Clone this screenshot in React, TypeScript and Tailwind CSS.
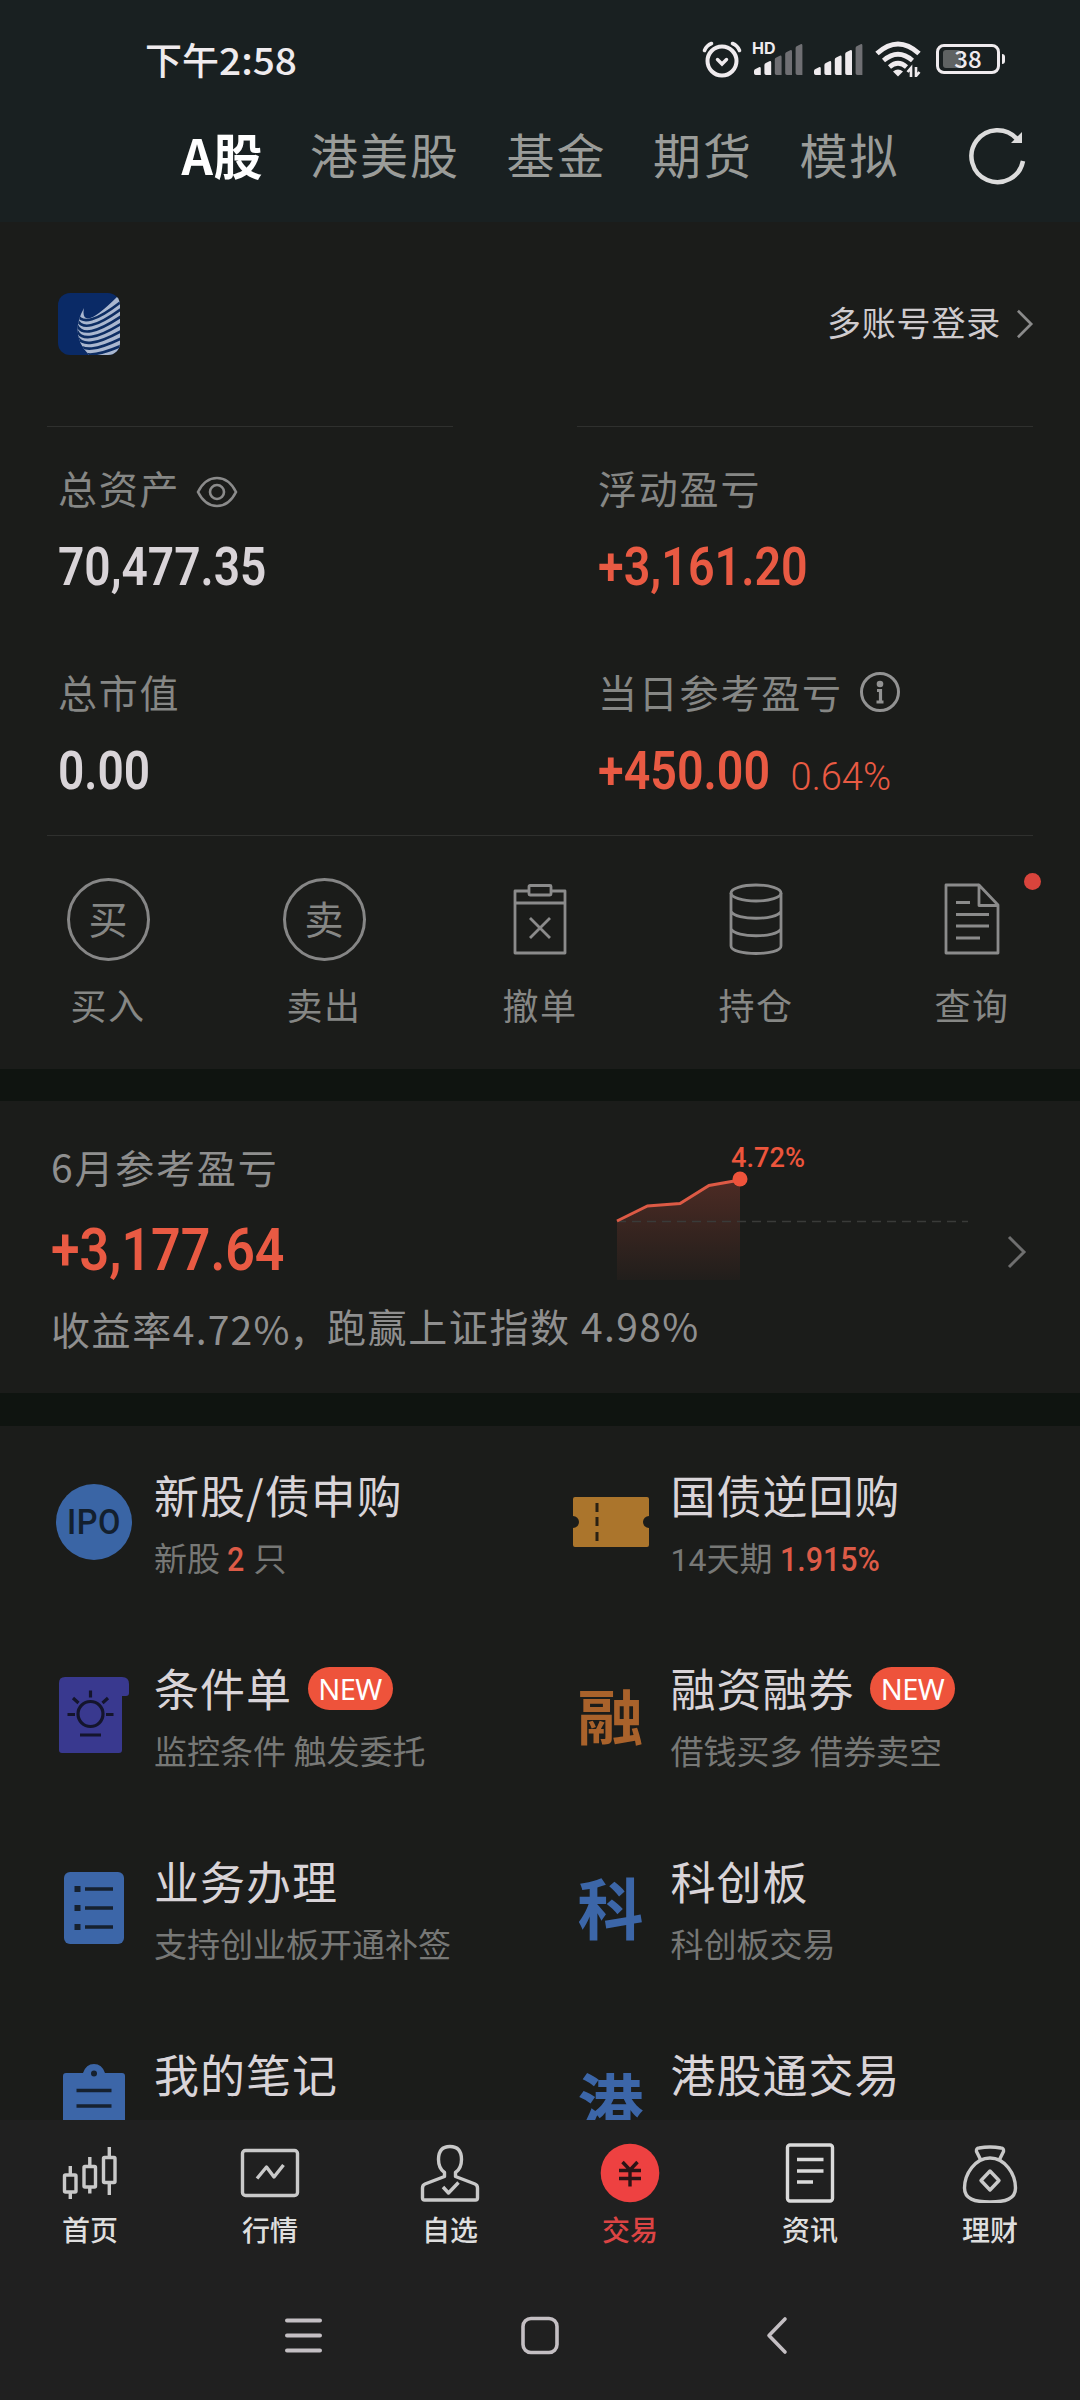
import React from 'react';

type IconProps = { className?: string };

const tabs = ['港美股', '基金', '期货', '模拟'];

function SignalBars({ active }: { active: number }) {
  const tops = [23, 17, 11.5, 6, 0];
  return (
    <svg width="50" height="31" viewBox="0 0 50 31">
      {tops.map((top, i) => (
        <path
          key={i}
          d={`M${i * 10.4} ${top + 4}q0 -1.5 1.5 -2l3.5 -1.8q1.8 -.5 1.8 1.3V31h-5q-1.8 0 -1.8 -1.8z`}
          fill={i < active ? '#efebee' : '#6f6f73'}
        />
      ))}
    </svg>
  );
}

function StatusBar() {
  return (
    <div className="flex h-[118px] items-center pl-[145px] pr-[80px] text-[#efebee]">
      <span className="text-[37px] font-medium leading-none">
        下午<span className="inline-block origin-left scale-x-[1.05]">2:58</span>
      </span>
      <div className="ml-auto flex items-center">
        <svg width="40" height="38" viewBox="0 0 40 38" fill="none" stroke="#efebee" strokeWidth="4" strokeLinecap="round">
          <circle cx="20" cy="21" r="14.5" />
          <path d="M15.5 19.5l4.5 4.5 4.5-4.5" strokeWidth="3.4" />
          <path d="M2.5 10.5Q4.5 5.500 9.500 3.500M30.500 3.500Q35.500 5.500 37.500 10.500" strokeWidth="3.600" />
        </svg>
        <div className="relative ml-[12px] pt-px">
          <span className="absolute -left-[2px] -top-[3px] font-['Inter',sans-serif] text-[16px] font-bold leading-none">HD</span>
          <SignalBars active={2} />
        </div>
        <div className="ml-[10px] pt-px">
          <SignalBars active={4} />
        </div>
        <svg className="ml-[11px]" width="47" height="36" viewBox="0 0 47 36" fill="none" stroke="#efebee" strokeWidth="5">
          <path d="M2 12.500Q23 -6.500 44 12.500" />
          <path d="M8.500 19.500Q23 7 37.500 19.500" strokeWidth="4.600" />
          <path d="M14.500 26Q23 18.500 31.500 26" strokeWidth="4.600" />
          <path d="M18 30.500Q23 26.500 28 30.500L23 35.500z" fill="#efebee" stroke="none" />
          <path d="M36 36V27l-3.500 4M41 26v9l3.500-4" strokeWidth="2.600" />
        </svg>
        <div className="relative ml-[14px] flex h-[30px] w-[64px] items-center justify-center rounded-[8px] border-[3px] border-[#efebee] font-['Noto_Sans_CJK_SC',sans-serif] text-[24px] font-medium leading-none">
          <span className="absolute left-[4px] top-[3px] h-[18px] w-[18px] rounded-[3px] bg-[#5f6363]" />
          <span className="relative pb-[2px]">38</span>
          <span className="absolute -right-[8px] top-[7px] h-[10px] w-[3px] rounded-r-full bg-[#efebee]" />
        </div>
      </div>
    </div>
  );
}

function RefreshIcon() {
  return (
    <svg width="60" height="60" viewBox="0 0 60 60" fill="none" stroke="#dcdcdc" strokeWidth="4.500">
      <path d="M55 35A26 26 0 1 1 49 13" />
      <path d="M54 6v11H43z" fill="#dcdcdc" stroke="none" />
    </svg>
  );
}

function Header() {
  return (
    <header className="h-[222px] bg-[#192021]">
      <StatusBar />
      <nav className="flex h-[70px] items-center gap-[46.5px] pl-[181.5px] pr-[52px] text-[48px] leading-none tracking-[2px] text-[#9a9c99]">
        <span className="w-[82px] whitespace-nowrap text-[49px] font-bold tracking-[.5px] text-white">A股</span>
        {tabs.map((tab) => (
          <span key={tab}>{tab}</span>
        ))}
        <span className="ml-auto pt-[6px]"><RefreshIcon /></span>
      </nav>
    </header>
  );
}

function BrokerLogo() {
  return (
    <svg width="62" height="62" viewBox="0 0 62 62">
      <defs>
        <clipPath id="tile"><rect width="62" height="62" rx="12" /></clipPath>
        <clipPath id="wave"><path d="M26 15Q24 25 30 25.500Q38 25 60 3L62 3V62H31Q11 42 26 15z" /></clipPath>
      </defs>
      <g clipPath="url(#tile)">
        <rect width="62" height="62" fill="#0a2a66" />
        <g clipPath="url(#wave)">
          <rect width="62" height="62" fill="#aab7cf" />
          {[0, 1, 2, 3, 4, 5, 6, 7].map((i) => (
            <path
              key={i}
              d={`M19 ${21 + i * 5.6}Q26 ${38 + i * 5.2} 64 ${8 + i * 7.4}`}
              fill="none"
              stroke="#0d2d63"
              strokeWidth="2.600"
            />
          ))}
        </g>
      </g>
    </svg>
  );
}

function Chevron({ className }: IconProps) {
  return (
    <svg className={className} width="20" height="34" viewBox="0 0 20 34" fill="none" strokeWidth="3">
      <path d="M2 2l15 15L2 32" />
    </svg>
  );
}

function EyeIcon() {
  return (
    <svg className="mt-[10px]" width="42" height="32" viewBox="0 0 42 32" fill="none" stroke="#8b8b8b" strokeWidth="2.600">
      <path d="M2 16Q9 2 21 2T40 16Q33 30 21 30T2 16z" />
      <circle cx="21" cy="16" r="7" />
    </svg>
  );
}

function InfoIcon() {
  return (
    <svg className="mt-[2px]" width="42" height="42" viewBox="0 0 42 42" fill="none" stroke="#929292" strokeWidth="3">
      <circle cx="21" cy="21" r="18.500" />
      <circle cx="21" cy="13" r="3.300" fill="#929292" stroke="none" />
      <path d="M18 19.500h3.500V31M17.500 31h7" strokeWidth="3.200" />
    </svg>
  );
}

function Stat({ label, icon, value, red, extra }: {
  label: string;
  icon?: React.ReactNode;
  value: string;
  red?: boolean;
  extra?: string;
}) {
  return (
    <div className="h-[131px]">
      <div className="flex h-[48px] items-center text-[39px] leading-none tracking-[1.8px] text-[#868785]">
        {label}
        {icon && <span className="ml-[16px]">{icon}</span>}
      </div>
      <div className={`mt-[28px] flex h-[56px] items-center font-['Roboto',sans-serif] text-[53px] leading-none ${red ? 'text-[#e95a43]' : 'text-[#d9d4d8]'}`}>
        <span className={`origin-left font-semibold ${red ? 'scale-x-[.88]' : 'scale-x-[.87]'}`}>{value}</span>
        {extra && <span className="-ml-[3px] pt-[11px] text-[38px] font-light">{extra}</span>}
      </div>
    </div>
  );
}

function CircleChar({ char }: { char: string }) {
  return (
    <span className="flex h-[83px] w-[83px] items-center justify-center rounded-full border-[3px] border-[#868686] pb-[3px] text-[39px] leading-none">
      {char}
    </span>
  );
}

function CancelIcon() {
  return (
    <svg width="56" height="72" viewBox="0 0 56 72" fill="none" stroke="#8b8b8b" strokeWidth="2.800" strokeLinejoin="round">
      <path d="M17 8H3v62h50V8H39" />
      <rect x="17" y="2.500" width="22" height="9.500" rx="1" />
      <path d="M3 20h50M18 35l20 20M38 35L18 55" />
    </svg>
  );
}

function HoldingsIcon() {
  return (
    <svg width="54" height="72" viewBox="0 0 54 72" fill="none" stroke="#8b8b8b" strokeWidth="2.800">
      <ellipse cx="27" cy="10" rx="25" ry="8" />
      <path d="M2 10v53c0 10 50 10 50 0V10M2 28.500c5 9 45 9 50 0M2 46c5 9 45 9 50 0" />
    </svg>
  );
}

function QueryIcon() {
  return (
    <svg width="56" height="72" viewBox="0 0 56 72" fill="none" stroke="#8b8b8b" strokeWidth="2.800" strokeLinejoin="round">
      <path d="M35 2H2v68h52V22L35 2v20.500h19M12 19.500h14M12 31.500h33M12 43h33M12 55h24" />
    </svg>
  );
}

const actions = [
  { label: '买入', icon: <CircleChar char="买" /> },
  { label: '卖出', icon: <CircleChar char="卖" /> },
  { label: '撤单', icon: <CancelIcon /> },
  { label: '持仓', icon: <HoldingsIcon /> },
  { label: '查询', icon: <QueryIcon />, dot: true },
];

function AccountPanel() {
  return (
    <section className="h-[847px] bg-[#1b1c1a] pt-[71px]">
      <div className="flex h-[62px] items-center justify-between pl-[58px] pr-[45px]">
        <BrokerLogo />
        <div className="flex items-center text-[34px] leading-none tracking-[.8px] text-[#cfcbce]">
          <span className="pb-[4px]">多账号登录</span>
          <Chevron className="ml-[14px] h-[30px] stroke-[#8b8b8b]" />
        </div>
      </div>
      <div className="mx-[47px] mt-[71px] flex justify-between">
        <div className="h-px w-[406px] bg-[#2f302e]" />
        <div className="h-px w-[456px] bg-[#2f302e]" />
      </div>
      <div className="mx-[47px] grid h-[409px] grid-cols-[540px_1fr] content-start gap-y-[73px] border-b border-[#2f302e] pl-[11px] pt-[36px]">
        <Stat label="总资产" icon={<EyeIcon />} value="70,477.35" />
        <Stat label="浮动盈亏" value="+3,161.20" red />
        <Stat label="总市值" value="0.00" />
        <Stat label="当日参考盈亏" icon={<InfoIcon />} value="+450.00" red extra="0.64%" />
      </div>
      <div className="grid grid-cols-5 pt-[41px] text-[#868785]">
        {actions.map((action) => (
          <div key={action.label} className="relative flex flex-col items-center">
            <div className="flex h-[84px] items-center">{action.icon}</div>
            <span className="mt-[21px] h-[44px] text-[36px] leading-[44px] tracking-[1.6px]">{action.label}</span>
            {action.dot && <span className="absolute right-[39px] top-[-4px] h-[17px] w-[17px] rounded-full bg-[#d9443c]" />}
          </div>
        ))}
      </div>
    </section>
  );
}

function ProfitChart() {
  return (
    <svg className="shrink-0" width="360" height="140" viewBox="0 0 360 140" fill="none">
      <defs>
        <linearGradient id="area" x1="0" y1="0" x2="0" y2="1">
          <stop offset="0" stopColor="#e95a43" stopOpacity=".24" />
          <stop offset="1" stopColor="#e95a43" stopOpacity=".03" />
        </linearGradient>
      </defs>
      <path d="M7 79L37.500 64 70 61.500 99 43.500 130 38V138H7z" fill="url(#area)" />
      <path d="M7 79.500H358" stroke="#3a3b39" strokeWidth="1.500" strokeDasharray="9 6" />
      <path d="M7 79L37.500 64 70 61.500 99 43.500 130 38" stroke="#dd5a45" strokeWidth="3" />
      <circle cx="130" cy="37" r="7.500" fill="#ee533b" />
      <text x="121" y="25" fill="#ec553c" fontSize="28" fontFamily="Roboto, sans-serif" fontWeight="500" textLength="74" lengthAdjust="spacingAndGlyphs">4.72%</text>
    </svg>
  );
}

function MonthlyProfit() {
  return (
    <section className="mt-[32px] h-[292px] bg-[#1b1c1a] pl-[51px] pr-[53px] pt-[41px] text-[39px] leading-none text-[#8f8f8f]">
      <div className="flex h-[140px]">
        <div className="w-[559px]">
          <div className="h-[48px] leading-[48px] tracking-[1.8px]">6月参考盈亏</div>
          <div className="mt-[30px] h-[60px] origin-left scale-x-[.88] font-['Roboto',sans-serif] text-[59px] font-semibold leading-[60px] text-[#e95a43]">+3,177.64</div>
        </div>
        <ProfitChart />
        <Chevron className="ml-auto mt-[93px] stroke-[#6f6f6f]" />
      </div>
      <div className="mt-[21px] flex h-[48px] whitespace-pre leading-[48px] tracking-[1.6px]">
        <span className="w-[276px] pt-px">收益率<span className="tracking-[1.2px]">4.72%</span><span className="-ml-[1px]">，</span></span>
        <span className="-mt-[2px]">跑赢上证指数 <span className="tracking-[1.4px]">4.98%</span></span>
      </div>
    </section>
  );
}

function IpoIcon() {
  return (
    <span className="flex h-[76px] w-[76px] items-center justify-center rounded-full bg-[#3a65a5] font-['Roboto',sans-serif] text-[35px] font-medium leading-none text-[#13202f]">
      <span className="scale-x-[.93] tracking-[.5px]">IPO</span>
    </span>
  );
}

function TicketIcon() {
  return (
    <svg width="78" height="50" viewBox="0 0 78 50">
      <path d="M3 0h72q2 0 2 2v17a6 6 0 0 0 0 12v17q0 2-2 2H3q-2 0-2-2V31a6 6 0 0 0 0-12V2q0-2 2-2z" fill="#ab752c" />
      <path d="M25 6v9M25 20v9M25 35v9" stroke="#2a2113" strokeWidth="3" />
    </svg>
  );
}

function ConditionIcon() {
  return (
    <svg width="70" height="76" viewBox="0 0 70 76">
      <path d="M6 0h57q7 0 7 7v9q0 3-3 3h-4v54q0 3-3 3H3q-3 0-3-3V6q0-6 6-6z" fill="#39398f" />
      <g fill="none" stroke="#14152c" strokeWidth="3.200">
        <circle cx="31.500" cy="37" r="12.500" />
        <path d="M31.500 13.500v7M14 21l5.500 5M49 21l-5.500 5M8.500 37.500H16M47 37.500h7.500M21 58h21" />
      </g>
    </svg>
  );
}

function BusinessIcon() {
  return (
    <svg width="60" height="72" viewBox="0 0 60 72">
      <rect width="60" height="72" rx="6" fill="#3c66a8" />
      <path d="M21 17h28M21 36h28M21 55h28" stroke="#16212f" strokeWidth="3.400" />
      <path d="M10.500 17h6M10.500 36h6M10.500 55h6" stroke="#16212f" strokeWidth="6" />
    </svg>
  );
}

function NotesIcon() {
  return (
    <svg width="62" height="74" viewBox="0 0 62 74">
      <path d="M3 9h17q3-9 11-9t11 9h17q3 0 3 3v62H0V12q0-3 3-3z" fill="#3c66a8" />
      <circle cx="31" cy="9.500" r="3" fill="#16212f" />
      <path d="M13.500 26.500h35M13.500 42h35" stroke="#16212f" strokeWidth="3.400" />
    </svg>
  );
}

function CharIcon({ char, className }: { char: string; className: string }) {
  return <span className={`text-[66px] font-bold leading-none ${className}`}>{char}</span>;
}

function Red({ children }: { children: React.ReactNode }) {
  return <span className="inline-block origin-left scale-x-[.92] font-['Roboto',sans-serif] font-medium text-[#dd5b47]">{children}</span>;
}

const services = [
  { title: '新股/债申购', icon: <IpoIcon />, sub: <>新股 <Red>2</Red> 只</> },
  { title: '国债逆回购', icon: <TicketIcon />, sub: <><span className="font-['Roboto',sans-serif] text-[32px]">14</span>天期 <Red>1.915%</Red></> },
  { title: '条件单', icon: <ConditionIcon />, sub: '监控条件 触发委托', isNew: true },
  { title: '融资融券', icon: <CharIcon char="融" className="scale-y-[.92] pb-[4px] text-[#a9622b]" />, sub: '借钱买多 借券卖空', isNew: true },
  { title: '业务办理', icon: <BusinessIcon />, sub: '支持创业板开通补签' },
  { title: '科创板', icon: <CharIcon char="科" className="pb-[6px] text-[#3c66a8]" />, sub: '科创板交易' },
  { title: '我的笔记', icon: <NotesIcon />, sub: '' },
  { title: '港股通交易', icon: <CharIcon char="港" className="pb-[2px] text-[#3c66a8]" />, sub: '' },
];

function ServiceGrid() {
  return (
    <section className="mt-[33px] grid h-[694px] auto-rows-[193px] grid-cols-[516.5px_1fr] overflow-hidden bg-[#1b1c1a] pl-[54px] pt-[40px]">
      {services.map((item) => (
        <div key={item.title} className="flex">
          <div className="mt-[16px] flex h-[80px] w-[80px] shrink-0 items-center justify-center">{item.icon}</div>
          <div className="ml-[20px]">
            <div className="flex h-[56px] items-center text-[45px] leading-none tracking-[1px] text-[#d9d4d8]">
              {item.title}
              {item.isNew && (
                <span className="ml-[15.5px] mt-[2px] flex h-[43px] w-[85px] items-center justify-center rounded-full bg-[#ee533b] font-['Noto_Sans',sans-serif] text-[29px] tracking-[-.5px] text-white">NEW</span>
              )}
            </div>
            <div className="mt-[15px] h-[40px] whitespace-pre text-[33px] leading-[40px] text-[#777876]">{item.sub}</div>
          </div>
        </div>
      ))}
    </section>
  );
}

function NavSvg({ children }: { children: React.ReactNode }) {
  return (
    <svg width="60" height="60" viewBox="0 0 60 60" fill="none" stroke="#c9c9c9" strokeWidth="3.400" strokeLinejoin="round">
      {children}
    </svg>
  );
}

const navItems = [
  {
    label: '首页',
    icon: (
      <NavSvg>
        <rect x="4.500" y="32" width="11.500" height="17" rx="1" />
        <rect x="24" y="23.500" width="11.500" height="20.500" rx="1" />
        <rect x="43.500" y="14.500" width="11.500" height="25" rx="1" />
        <path d="M10.300 23v9M10.300 49v7M29.800 14v9M29.800 44v6.500M49.300 4v10M49.300 40v12" />
      </NavSvg>
    ),
  },
  {
    label: '行情',
    icon: (
      <NavSvg>
        <rect x="2.500" y="7.500" width="55" height="45" rx="3" />
        <path d="M17 35.500l9.500-11.500 7.500 10 9.500-12" />
      </NavSvg>
    ),
  },
  {
    label: '自选',
    icon: (
      <NavSvg>
        <path d="M24.500 33.500v-4q-6-4-6-13Q18.500 3.500 30 3.500T41.500 16.500q0 9-6 13v4L55 41q2.500 1 2.500 4v10q0 2-2 2h-51q-2 0-2-2V45q0-3 2.500-4z" />
        <path d="M23 44l5.500 6 10-10.500" />
      </NavSvg>
    ),
  },
  {
    label: '交易',
    active: true,
    icon: (
      <NavSvg>
        <circle cx="30" cy="30" r="29.300" fill="#ee4141" stroke="none" />
        <path d="M22.500 19l7.500 8 7.500-8M19 27.500h22M19 35.500h22M30 27v16.500" stroke="#2b1416" />
      </NavSvg>
    ),
  },
  {
    label: '资讯',
    icon: (
      <NavSvg>
        <g stroke="#dadada">
          <rect x="7.500" y="2" width="45" height="56" rx="2.500" />
          <path d="M17 16.500h26.500M17 28h26.500M17 39h16" />
        </g>
      </NavSvg>
    ),
  },
  {
    label: '理财',
    icon: (
      <NavSvg>
        <path d="M20.500 16.500l-4-8Q16 5 19 5q11-2 22 0 3 0 2.500 3.500l-4 8" />
        <path d="M30 15c-15 0-25.500 16-25.500 30 0 11 10 14 25.500 14s25.500-3 25.500-14c0-14-10.500-30-25.500-30z" />
        <path d="M30 28l9 9.500-9 9.500-9-9.500z" />
      </NavSvg>
    ),
  },
];

function BottomNav() {
  return (
    <nav className="grid h-[140px] grid-cols-6 pt-[23px]">
      {navItems.map((item) => (
        <div key={item.label} className="flex flex-col items-center">
          {item.icon}
          <span className={`mt-[6px] h-[40px] text-[28px] font-medium leading-[40px] ${item.active ? 'text-[#dc4444]' : 'text-[#dedede]'}`}>{item.label}</span>
        </div>
      ))}
    </nav>
  );
}

function SystemNav() {
  return (
    <div className="flex h-[140px] items-center justify-center gap-[193px] pr-px pt-[12px]">
      <svg width="44" height="44" viewBox="0 0 44 44" stroke="#c4bfc3" strokeWidth="4" strokeLinecap="round">
        <path d="M6 6.500h33M6 21.500h33M6 36.500h33" />
      </svg>
      <svg width="44" height="44" viewBox="0 0 44 44" fill="none" stroke="#c4bfc3" strokeWidth="3.600">
        <rect x="5" y="4.500" width="34" height="34" rx="8" />
      </svg>
      <svg width="44" height="44" viewBox="0 0 44 44" fill="none" stroke="#c4bfc3" strokeWidth="3.600" strokeLinecap="round" strokeLinejoin="round">
        <path d="M30 5L14 21.500 30 38" />
      </svg>
    </div>
  );
}

function App() {
  return (
    <div className="flex h-[2400px] w-[1080px] flex-col overflow-hidden bg-[#0f1410] font-['Noto_Sans_CJK_SC',sans-serif]">
      <Header />
      <AccountPanel />
      <MonthlyProfit />
      <ServiceGrid />
      <footer className="h-[280px] bg-[#202020]">
        <BottomNav />
        <SystemNav />
      </footer>
    </div>
  );
}

export default App;
